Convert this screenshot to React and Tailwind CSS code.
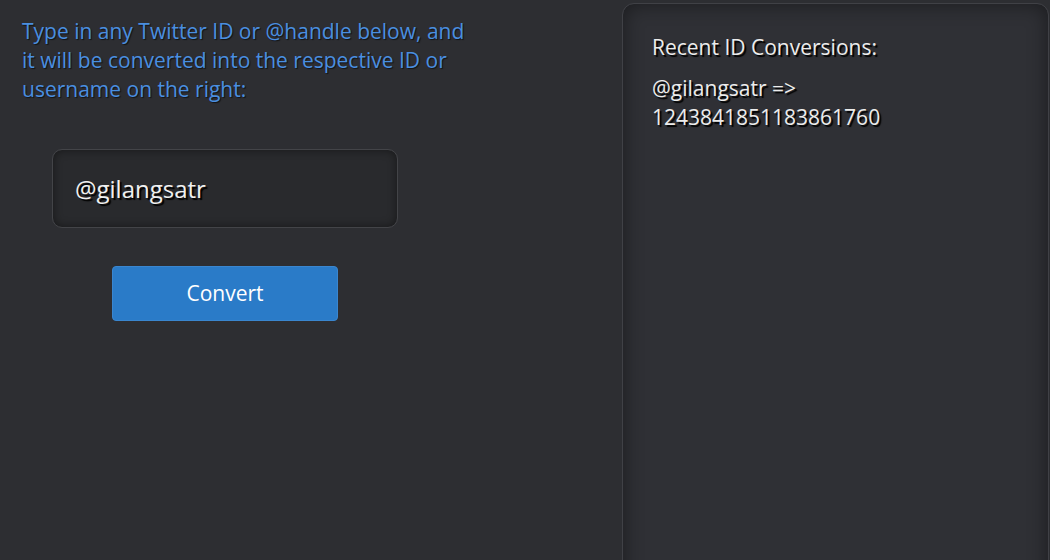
import React from "react";

export default function App() {
  return (
    <div
      className="w-[1050px] h-[560px] overflow-hidden bg-[#2d2e32] flex"
      style={{ fontFamily: '"Open Sans", "Noto Sans", sans-serif' }}
    >
      <div className="flex-1 flex flex-col">
        <p className="pl-[22px] pt-[17px] text-[21px] leading-[29px] text-[#4a8fe0] [text-shadow:1px_1px_1px_rgba(0,0,0,0.6)]">
          Type in any Twitter ID or @handle below, and
          <br />
          it will be converted into the respective ID or
          <br />
          username on the right:
        </p>
        <div className="ml-[52px] mt-[45px] w-[346px] h-[79px] rounded-[10px] border border-[#434448] bg-[#292a2d] shadow-[inset_0_0_10px_rgba(0,0,0,0.45)] flex items-center pl-[22px]">
          <span className="text-[24px] text-[#f0f0f0] [text-shadow:2px_2px_1px_#000]">
            @gilangsatr
          </span>
        </div>
        <button className="ml-[112px] mt-[38px] w-[226px] h-[55px] rounded-[4px] bg-[#2a7bc8] border border-[#3a86cf] text-[21px] text-white flex items-center justify-center">
          Convert
        </button>
      </div>
      <div className="w-[427px] mt-[3px] mr-[1px] h-[600px] rounded-[12px] border border-[#404146] bg-[#2f3035] shadow-[inset_0_0_20px_rgba(0,0,0,0.45)] pl-[29px] pt-[29px] text-[21px] leading-[29px] text-[#ececec] [text-shadow:2px_2px_1px_#000]">
        <p>Recent ID Conversions:</p>
        <p className="mt-[12px]">
          @gilangsatr =&gt;
          <br />
          1243841851183861760
        </p>
      </div>
    </div>
  );
}
